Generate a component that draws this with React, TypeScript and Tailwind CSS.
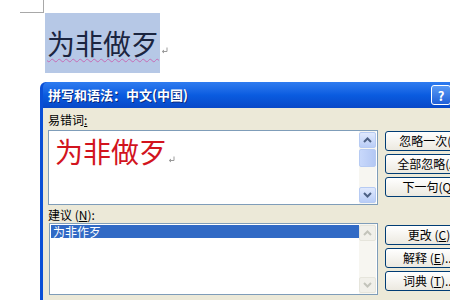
import type { ReactNode } from 'react'

const uiFont = { fontFamily: '"Noto Sans CJK SC", "Liberation Sans", sans-serif' }

function Chevron({ up, disabled }: { up?: boolean; disabled?: boolean }) {
    return (
        <svg width="9" height="6" viewBox="0 0 9 6">
            <path
                d={up ? 'M1 5 L4.5 1.5 L8 5' : 'M1 1 L4.5 4.5 L8 1'}
                fill="none"
                stroke={disabled ? '#c3c4bb' : '#4d6185'}
                strokeWidth="2"
            />
        </svg>
    )
}

function ScrollButton({ up, disabled }: { up?: boolean; disabled?: boolean }) {
    return (
        <div
            className={
                'h-[16px] w-[17px] flex items-center justify-center rounded-[2px] border ' +
                (disabled
                    ? 'border-[#e6e5dc] bg-[#f1f0ea]'
                    : 'border-[#b7cbf3] bg-gradient-to-b from-[#e0e9fd] to-[#b9cdf7]')
            }
        >
            <Chevron up={up} disabled={disabled} />
        </div>
    )
}

function XpButton({ children }: { children: ReactNode }) {
    return (
        <div className="h-[20px] w-[88px] shrink-0 flex items-center justify-center whitespace-nowrap rounded-[3px] border border-[#003c74] bg-gradient-to-b from-[#ffffff] to-[#ece9e0] text-[12px] leading-none text-black">
            {children}
        </div>
    )
}

function ReturnMark({ className }: { className?: string }) {
    return (
        <svg width="7" height="7" viewBox="0 0 7 7" className={className}>
            <path d="M6 0.5 V4.5 H1.5 M3 3 L1.2 4.5 L3 6" fill="none" stroke="#9a9a9a" strokeWidth="1" />
        </svg>
    )
}

export default function App() {
    return (
        <div className="w-[450px] h-[300px] overflow-hidden bg-white" style={uiFont}>
            {/* page corner mark */}
            <div className="h-[13px] w-[24px] ml-[20px] border-r border-b border-[#a8a8a8]" />

            {/* selected word in document */}
            <div className="flex items-center ml-[45px] h-[60px]">
                <div className="h-full w-[115px] bg-[#b6c8e6] flex items-center pl-[2px]">
                    <span className="whitespace-nowrap text-[28px] leading-none text-[#1b2540] underline decoration-wavy decoration-[#c66cb4] decoration-1 underline-offset-[3px]">
                        为非做歹
                    </span>
                </div>
                <ReturnMark className="ml-[1px] mt-[14px]" />
            </div>

            {/* dialog */}
            <div className="mt-[9px] ml-[40px] w-[420px] rounded-tl-[6px] bg-[#0a4fd6] pl-[3px]">
                <div className="h-[26px] flex items-center justify-between rounded-tl-[5px] bg-gradient-to-b from-[#2f7cf0] via-[#0a5ce0] to-[#0848c8] pl-[5px] pr-[9px]">
                    <span className="text-[13px] font-bold text-white [text-shadow:1px_1px_0_#0a2a80]">
                        拼写和语法：中文(中国)
                    </span>
                    <div className="h-[20px] w-[20px] rounded-[3px] border border-white bg-gradient-to-b from-[#5a9af5] to-[#1f5fd8] flex items-center justify-center text-[13px] font-bold text-white leading-none">
                        ?
                    </div>
                </div>

                <div className="bg-[#ece9d8] pl-[5px] pt-[4px]">
                    {/* misspelled */}
                    <div className="flex">
                        <div className="flex flex-col">
                            <div className="h-[16px] text-[12px] leading-[16px] text-black">
                                易错词<span className="underline">:</span>
                            </div>
                            <div className="mt-[2px] h-[75px] w-[330px] flex border border-[#7f9db9] bg-white">
                                <div className="flex-1 flex items-start pl-[6px] pt-[3px]">
                                    <span className="whitespace-nowrap text-[28px] leading-[34px] text-[#d2141e]">为非做歹</span>
                                    <ReturnMark className="mt-[22px] ml-[1px]" />
                                </div>
                                <div className="w-[17px] mr-[1px] flex flex-col bg-[#f7f6f1] py-[1px]">
                                    <ScrollButton up />
                                    <div className="mt-[1px] h-[18px] w-[17px] rounded-[2px] border border-[#b7cbf3] bg-gradient-to-r from-[#c8d8fb] to-[#b4c8f4]" />
                                    <div className="flex-1" />
                                    <ScrollButton />
                                </div>
                            </div>
                        </div>
                        <div className="ml-[7px] pt-[19px] flex flex-col gap-[3px]">
                            <XpButton>忽略一次(I)</XpButton>
                            <XpButton>全部忽略(A)</XpButton>
                            <XpButton>下一句(Q)</XpButton>
                        </div>
                    </div>

                    {/* suggestions */}
                    <div className="flex mt-[2px]">
                        <div className="flex flex-col">
                            <div className="h-[16px] text-[12px] leading-[16px] text-black">
                                建议 (<span className="underline">N</span>):
                            </div>
                            <div className="h-[72px] w-[329px] ml-[1px] flex border border-[#7f9db9] bg-white">
                                <div className="flex-1 pt-[1px] pl-[1px]">
                                    <div className="h-[13px] bg-[#316ac5] text-[12px] leading-[13px] text-white pl-[2px]">
                                        为非作歹
                                    </div>
                                </div>
                                <div className="w-[17px] mr-[1px] flex flex-col justify-between bg-[#f7f6f1] py-[1px]">
                                    <ScrollButton up disabled />
                                    <ScrollButton disabled />
                                </div>
                            </div>
                        </div>
                        <div className="ml-[7px] pt-[18px] flex flex-col gap-[3px]">
                            <XpButton>更改 (<span className="underline">C</span>)</XpButton>
                            <XpButton>解释 (<span className="underline">E</span>)...</XpButton>
                            <XpButton>词典 (<span className="underline">T</span>)...</XpButton>
                        </div>
                    </div>
                    <div className="h-[10px]" />
                </div>
            </div>
        </div>
    )
}
